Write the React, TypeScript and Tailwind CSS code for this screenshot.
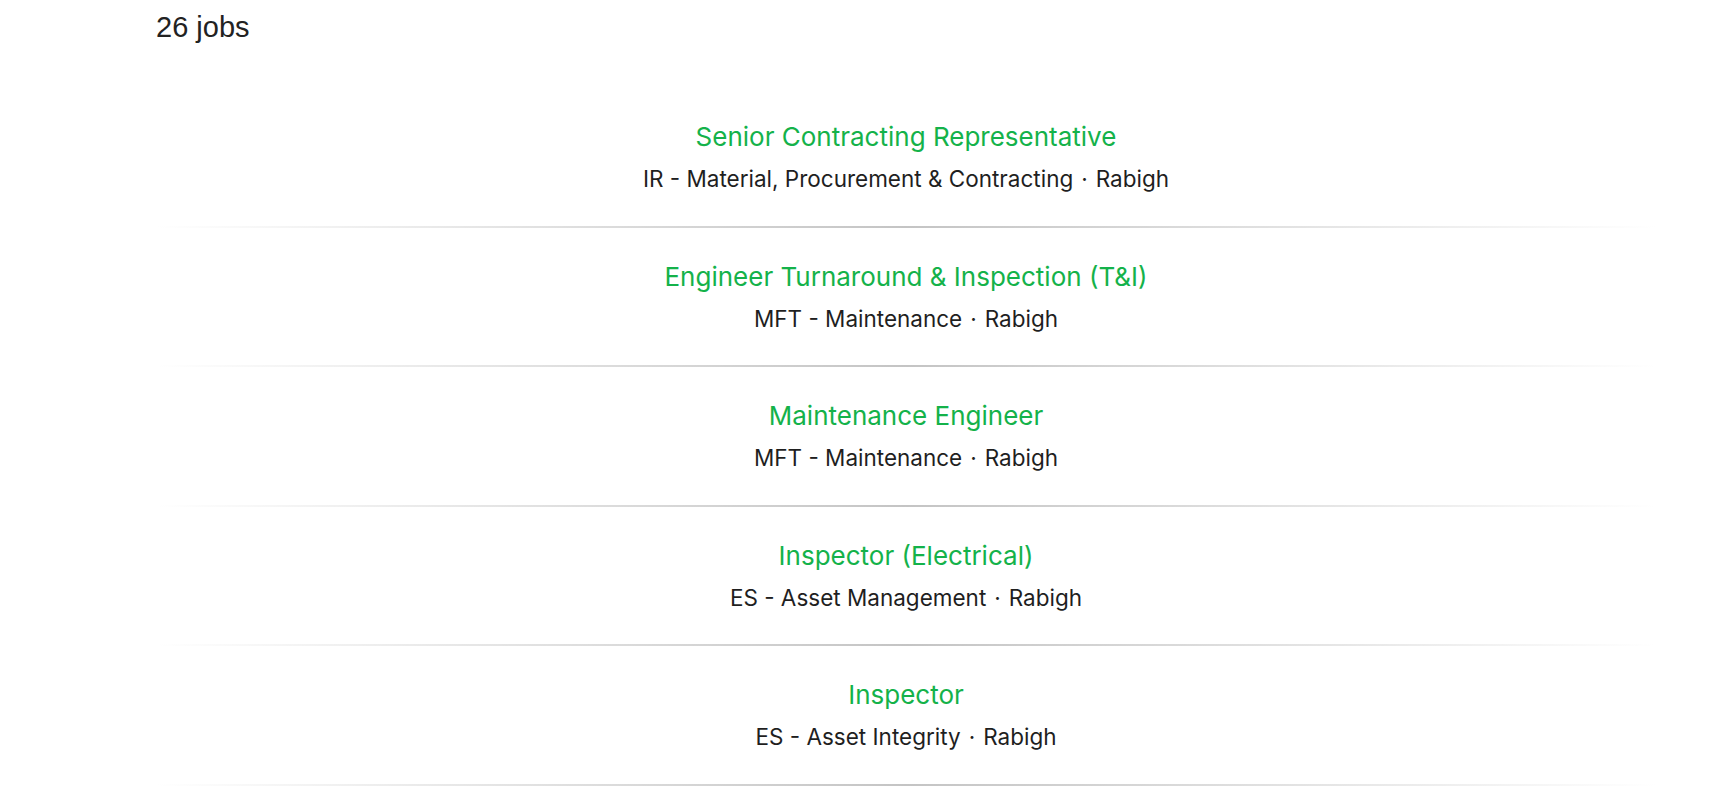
const jobs = [
  { title: "Senior Contracting Representative", dept: "IR - Material, Procurement & Contracting", city: "Rabigh" },
  { title: "Engineer Turnaround & Inspection (T&I)", dept: "MFT - Maintenance", city: "Rabigh" },
  { title: "Maintenance Engineer", dept: "MFT - Maintenance", city: "Rabigh" },
  { title: "Inspector (Electrical)", dept: "ES - Asset Management", city: "Rabigh" },
  { title: "Inspector", dept: "ES - Asset Integrity", city: "Rabigh" },
];

export default function App() {
  return (
    <div className="min-h-screen bg-white font-['Inter',_'Noto_Sans',_sans-serif]">
      <div className="ml-[156px] w-[1500px]">
        {/* Count */}
        <h2 className="pt-[6px] text-[29px] leading-[42px] font-medium text-[#222222] font-['Liberation_Sans',_Arial,_sans-serif]">
          26 jobs
        </h2>

        {/* Job list */}
        <ul className="mt-[40px]">
          {jobs.map((job) => (
            <li key={job.title}>
              <a href="#" className="flex flex-col items-center pt-[31px] pb-[28.5px] gap-[6px]">
                <span className="text-[26px] leading-[36px] text-[#14b24a]">{job.title}</span>
                <span className="text-[22.5px] leading-[36px] text-[#1f1f1f]">
                  {job.dept}
                  <span className="mx-[8px]">·</span>
                  {job.city}
                </span>
              </a>
              <div className="h-[2px] bg-gradient-to-r from-transparent via-[#c4c4c4] to-transparent" />
            </li>
          ))}
        </ul>
      </div>
    </div>
  );
}
